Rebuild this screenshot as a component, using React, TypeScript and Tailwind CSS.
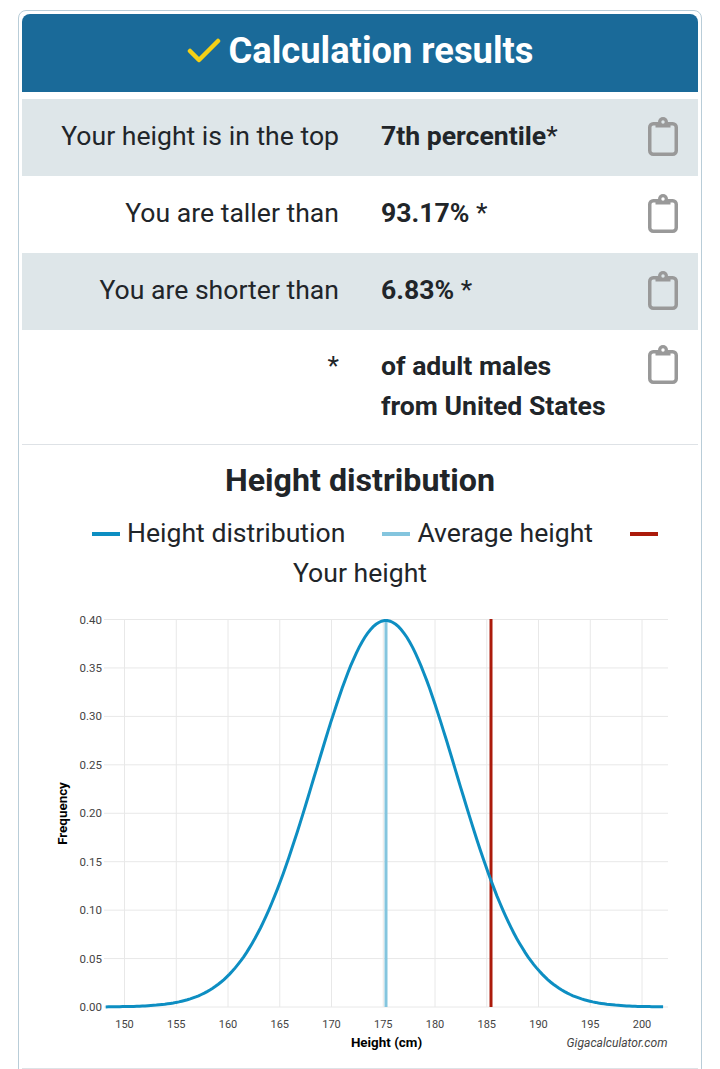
const rows = [
  { label: "Your height is in the top", value: "7th percentile", suffix: "*", shaded: true },
  { label: "You are taller than", value: "93.17% ", suffix: "*", shaded: false },
  { label: "You are shorter than", value: "6.83% ", suffix: "*", shaded: true },
];

const xForHeight = (h: number) => 124.5 + (h - 150) * 10.35;
const yForFreq = (f: number) => 1007 - f * 968.75;

// standard normal pdf, drawn from about -4 to +4 sd of the height scale
const curvePoints = () => {
  const pts: string[] = [];
  for (let z = -3.98; z <= 3.96; z += 0.04) {
    const f = Math.exp((-z * z) / 2) / Math.sqrt(2 * Math.PI);
    const x = xForHeight(175.25 + z * 6.8);
    pts.push(`${x.toFixed(1)},${yForFreq(f).toFixed(1)}`);
  }
  return pts.join(" ");
};

const ClipboardIcon = ({ hole }: { hole: string }) => (
  <svg width="30" height="39" viewBox="0 0 30 39" fill="none" className="block">
    <rect x="1.750" y="6.750" width="26.500" height="30.500" rx="3.500" stroke="#999999" strokeWidth="3.500" />
    <circle cx="15" cy="5" r="5" fill="#999999" />
    <path d="M7.500 5h15v5.500h-15z" fill="#999999" />
    <circle cx="15" cy="5" r="1.700" fill={hole} />
  </svg>
);

const Chart = () => {
  const xTicks = [150, 155, 160, 165, 170, 175, 180, 185, 190, 195, 200];
  const yTicks = [0, 0.05, 0.1, 0.15, 0.2, 0.25, 0.3, 0.35, 0.4];
  return (
    <svg width="676" height="468" viewBox="22 600 676 468" className="block" fontFamily="Roboto, sans-serif">
      {yTicks.map((t) => (
        <g key={t}>
          <line x1="104" x2="668" y1={yForFreq(t)} y2={yForFreq(t)} stroke="#e8e8e8" strokeWidth="1" />
          <text x="102" y={yForFreq(t) + 4} textAnchor="end" fontSize="11.500" fill="#444444">
            {t.toFixed(2)}
          </text>
        </g>
      ))}
      {xTicks.map((t) => (
        <g key={t}>
          <line x1={xForHeight(t)} x2={xForHeight(t)} y1="619" y2="1007" stroke="#e8e8e8" strokeWidth="1" />
          <text x={xForHeight(t)} y="1028" textAnchor="middle" fontSize="11" fill="#444444">
            {t}
          </text>
        </g>
      ))}
      <line x1="386" x2="386" y1="619" y2="1007" stroke="#84c5de" strokeWidth="3" />
      <line x1="491" x2="491" y1="619" y2="1007" stroke="#ab1a0b" strokeWidth="3" />
      <polyline points={curvePoints()} fill="none" stroke="#0d8ec2" strokeWidth="3" />
      <text x="386.500" y="1047" textAnchor="middle" fontSize="13.400" fontWeight="700" fill="#000000">
        Height (cm)
      </text>
      <text x="667.500" y="1047" textAnchor="end" fontSize="12.100" fontStyle="italic" fill="#444444">
        Gigacalculator.com
      </text>
      <text
        transform="translate(67 813.500) rotate(-90)"
        textAnchor="middle"
        fontSize="13.400"
        fontWeight="700"
        fill="#000000"
      >
        Frequency
      </text>
    </svg>
  );
};

const LegendKey = ({ color }: { color: string }) => (
  <span className={`mt-[2px] inline-block h-1 w-[28px] ${color}`} />
);

export default function App() {
  return (
    <div className="bg-white px-[18px] pt-[10px] font-['Roboto',sans-serif] text-[#212529] h-[1069px] overflow-hidden">
      <div className="rounded-lg border border-[#b9cdd8] px-[3px] pt-[3px] pb-[10px]">
        <div className="flex h-[78px] items-center justify-center gap-[8px] rounded-t-lg bg-[#1a6a99] pb-[4px]">
          <svg width="34" height="26" viewBox="0 0 34 26" fill="none">
            <path d="M3 13l9 9L31 3" stroke="#f5d016" strokeWidth="4.500" strokeLinecap="round" strokeLinejoin="round" />
          </svg>
          <h1 className="text-[36.300px] font-bold text-white">Calculation results</h1>
        </div>

        <div className="mt-[7px]">
          {rows.map((r) => (
            <div
              key={r.label}
              className={`grid h-[77px] grid-cols-[317px_1fr_50px] items-center pb-[3px] text-[26.600px] ${r.shaded ? "bg-[#dee6e9]" : "bg-white"}`}
            >
              <div className="text-right">{r.label}</div>
              <div className="pl-[42px]">
                <span className="font-bold">{r.value}</span>
                {r.suffix}
              </div>
              <ClipboardIcon hole={r.shaded ? "#dee6e9" : "#ffffff"} />
            </div>
          ))}
          <div className="grid h-[115px] grid-cols-[317px_1fr_50px] border-b border-[#dee2e6] pt-[16px] text-[26.600px] leading-[40px]">
            <div className="text-right">*</div>
            <div className="pl-[42px] font-bold">
              of adult males
              <br />
              from United States
            </div>
            <div className="-mt-px">
              <ClipboardIcon hole="#ffffff" />
            </div>
          </div>
        </div>

        <h2 className="mt-[14px] text-center text-[32.200px] font-bold leading-[42px]">Height distribution</h2>
        <div className="mt-[12px] text-center text-[26.600px] leading-[40px]">
          <div className="flex items-center justify-center gap-[37px] pl-[30px]">
            <span className="flex items-center gap-[7px]">
              <LegendKey color="bg-[#0d8ec2]" />
              Height distribution
            </span>
            <span className="flex items-center gap-[7px]">
              <LegendKey color="bg-[#84c5de]" />
              Average height
            </span>
            <LegendKey color="bg-[#ab1a0b]" />
          </div>
          <div>Your height</div>
        </div>

        <div className="mt-[7px] border-b border-[#dee2e6]">
          <Chart />
        </div>
      </div>
    </div>
  );
}
